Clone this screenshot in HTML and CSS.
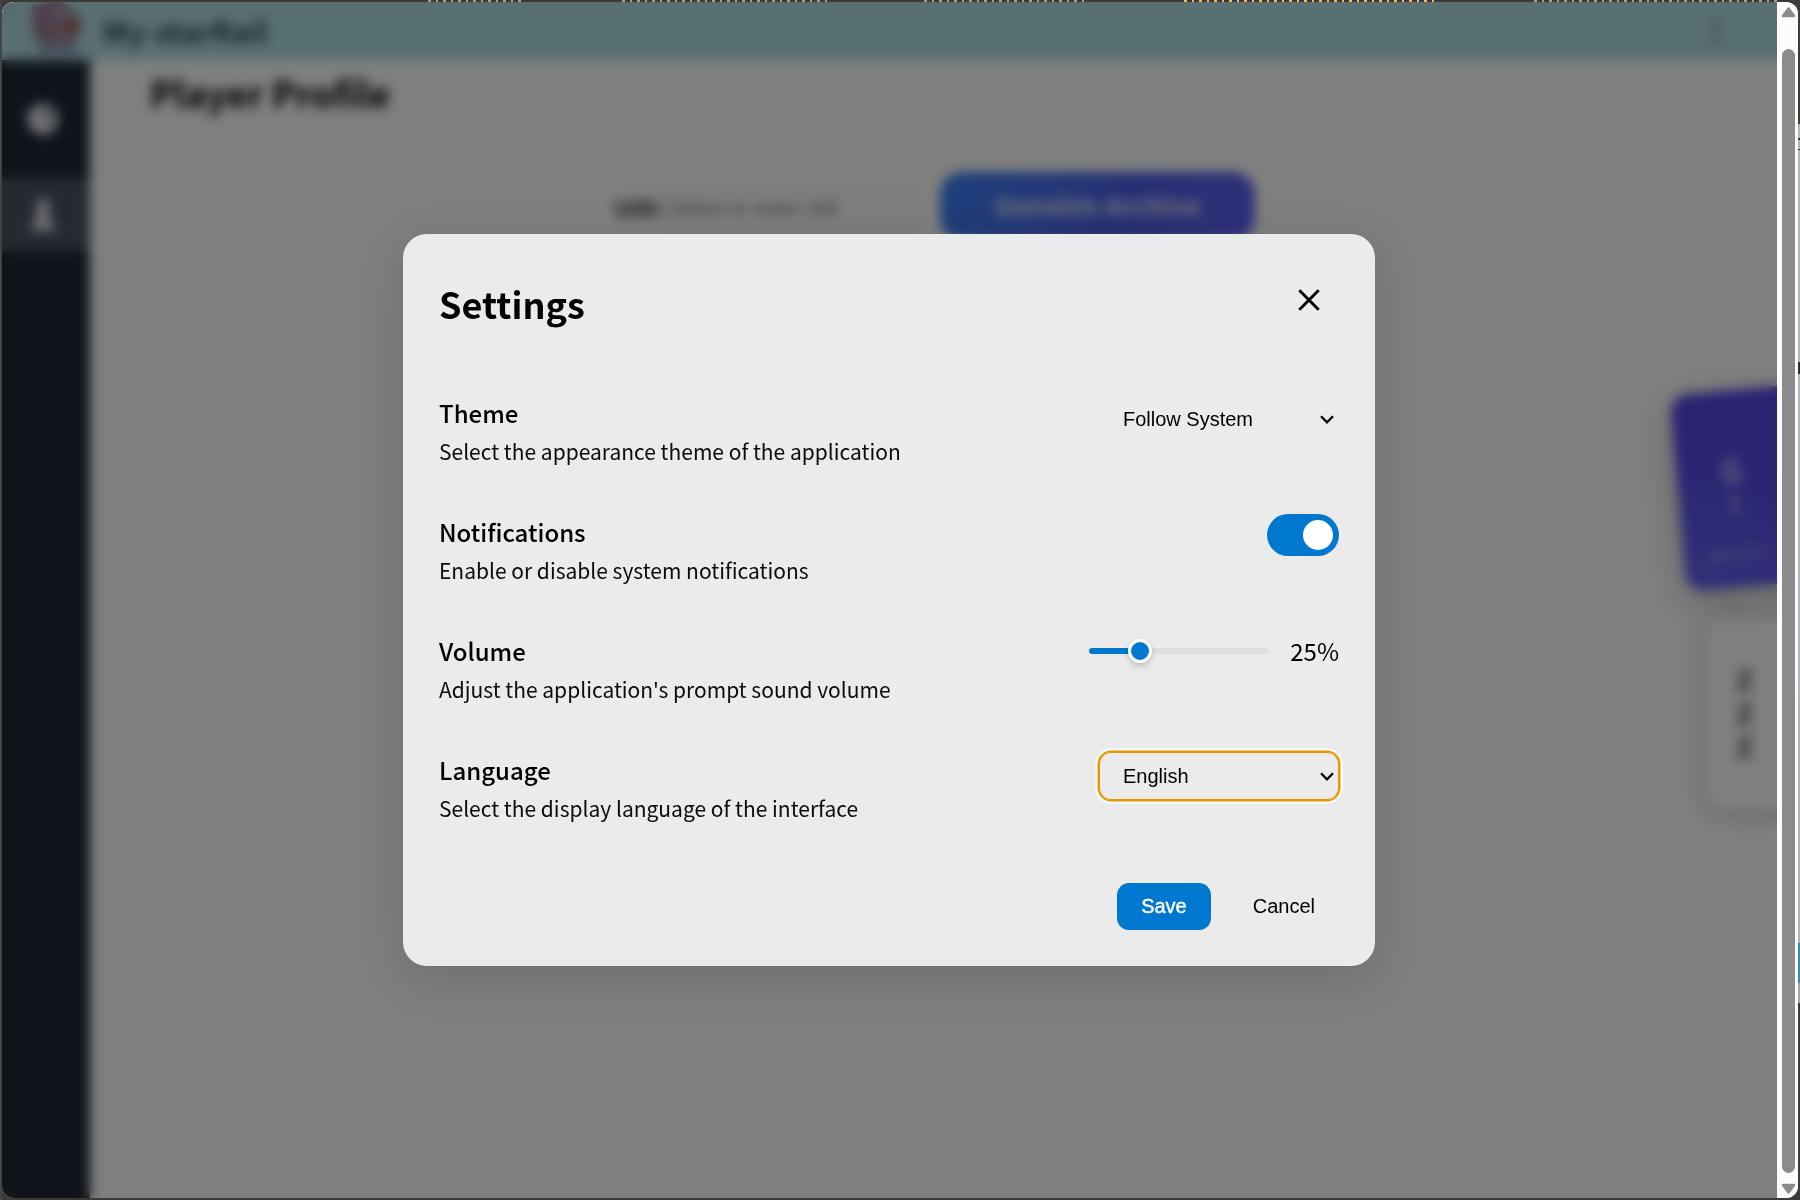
FILE: index.html
```html
<!DOCTYPE html>
<html lang="en">
<head>
<meta charset="utf-8">
<title>My-starRail</title>
<link rel="stylesheet" href="styles.css">
</head>
<body>
<div class="desktop-strip"><i class="s1"></i><i class="s2"></i><i class="s3"></i><i class="s4"></i><i class="s5"></i></div>
<div class="desktop-edge"></div>
<div class="window">
  <div class="view">
    <header class="topbar">
      <svg class="logo" viewBox="0 0 52 52"><circle cx="26" cy="25" r="24" fill="#a397a6"/><path d="M2 4h22l-6 18L2 26z" fill="#a0789b"/><circle cx="13" cy="30" r="6" fill="#8f686c"/><circle cx="43" cy="25" r="8" fill="#9a5c58"/><circle cx="25" cy="27" r="7" fill="#a8788c"/><path d="M8 40h38v12H8z" fill="#8f92b0"/></svg>
      <span class="brand">My-starRail</span>
      <span class="more"><i></i><i></i><i></i></span>
    </header>
    <div class="body">
      <nav class="sidebar">
        <a class="nav-item"><svg viewBox="0 0 36 36"><circle cx="18" cy="18" r="15.5" fill="#e5e7eb"/><path d="M20 2v15l11-9M20 17l12 4" stroke="#1f2937" stroke-width="1.5" fill="none"/></svg></a>
        <a class="nav-item active"><svg viewBox="0 0 36 36"><circle cx="18" cy="9" r="7" fill="#e5e7eb"/><path d="M13 14h10l1 8 6 6v5H6v-5l6-6z" fill="#e5e7eb"/></svg></a>
      </nav>
      <main class="page">
        <h1>Player Profile</h1>
        <div class="search"><b>UID:</b><span class="field">Select or enter UID</span><span class="archive">Genshin Archive</span></div>
        <div class="card game"><b>G</b><span>I</span><small>genshin</small></div>
        <div class="card zone"><b>Z</b><b>Z</b><b>Z</b></div>
      </main>
    </div>
    <div class="backdrop"></div>
    <div class="modal-layer">
      <section class="dialog">
        <div class="dialog-head">
          <h2>Settings</h2>
          <svg class="close" viewBox="0 0 24 24"><path d="M2.3 2.3l19.4 19.4M21.7 2.3L2.3 21.7" stroke="#000" stroke-width="2.9" fill="none"/></svg>
        </div>
        <div class="rows">
          <div class="row">
            <div><div class="label">Theme</div><div class="desc">Select the appearance theme of the application</div></div>
            <div class="select">Follow System<svg viewBox="0 0 14 9"><path d="M1 1.3l6 6 6-6" stroke="#000" stroke-width="2.3" fill="none"/></svg></div>
          </div>
          <div class="row">
            <div><div class="label">Notifications</div><div class="desc">Enable or disable system notifications</div></div>
            <div class="toggle"><i></i></div>
          </div>
          <div class="row">
            <div><div class="label">Volume</div><div class="desc">Adjust the application's prompt sound volume</div></div>
            <div class="volume"><div class="track"><i class="thumb"></i></div><span>25%</span></div>
          </div>
          <div class="row">
            <div><div class="label">Language</div><div class="desc">Select the display language of the interface</div></div>
            <div class="select focus">English<svg viewBox="0 0 14 9"><path d="M1 1.3l6 6 6-6" stroke="#000" stroke-width="2.3" fill="none"/></svg></div>
          </div>
        </div>
        <div class="actions"><span class="btn save">Save</span><span class="btn">Cancel</span></div>
      </section>
    </div>
  </div>
  <div class="scrollbar">
    <svg viewBox="0 0 15 11"><path d="M7.5 2L13 9.5H2z" fill="#8b8b8b" stroke="#8b8b8b" stroke-width="2.5" stroke-linejoin="round"/></svg>
    <i></i>
    <svg viewBox="0 0 15 11"><path d="M7.5 9L13 1.5H2z" fill="#8b8b8b" stroke="#8b8b8b" stroke-width="2.5" stroke-linejoin="round"/></svg>
  </div>
</div>
</body>
</html>
```

FILE: styles.css
```css
* { box-sizing: border-box; }
body {
  margin: 0;
  width: 1800px;
  height: 1200px;
  padding: 2px;
  overflow: hidden;
  position: relative;
  background: linear-gradient(90deg, #484947, #3b3a39 3px);
  font-family: "Noto Sans CJK SC", "Noto Sans", sans-serif;
  color: #000;
}
.desktop-strip { position: absolute; left: 0; top: 0; width: 1800px; height: 2px; }
.desktop-strip i { position: absolute; top: 0; height: 2px; background: repeating-linear-gradient(90deg, #b3987f 0 3px, transparent 3px 8px, #b3987f 8px 10px, transparent 10px 15px); }
.desktop-strip .s1 { left: 428px; width: 98px; }
.desktop-strip .s2 { left: 622px; width: 206px; }
.desktop-strip .s3 { left: 924px; width: 162px; }
.desktop-strip .s4 { left: 1184px; width: 252px; filter: sepia(1) saturate(2.2); }
.desktop-strip .s5 { left: 1534px; width: 246px; }
.desktop-edge {
  position: absolute; right: 0; top: 0; width: 3px; height: 1200px;
  background: linear-gradient(#3f3b39 0 124px, #a9b9b7 124px 138px, #303535 138px 140px, #a9b9b7 140px 149px, #303535 149px 150px, #a9b9b7 150px 362px, #29323a 362px 374px, #aabbbc 374px 680px, #b3b3b3 695px 943px, #328cab 943px 983px, #a4a4a4 983px 1003px, #3b3b3b 1003px);
}
.window {
  position: relative;
  display: flex;
  width: 1796px;
  height: 1196px;
  border-radius: 12px;
  overflow: hidden;
  background: #fff;
}
.view { position: relative; width: 1775px; height: 1196px; overflow: hidden; display: flex; flex-direction: column; }
.topbar {
  flex: none;
  height: 58px;
  background: #b2e0e6;
  display: flex;
  align-items: center;
  padding: 0 50px 0 28px;
}
.logo { width: 52px; height: 52px; margin-top: -8px; }
.brand { margin: -3px 0 0 21px; font: 700 29px/36px "Noto Sans CJK SC", sans-serif; color: #2c4a58; letter-spacing: .3px; }
.more { margin-left: auto; display: grid; gap: 5px; padding-right: 8px; }
.more i { width: 5px; height: 5px; border-radius: 50%; background: #40595e; }
.body { flex: 1; display: flex; }
.sidebar { width: 88px; background: #1f2937; padding-top: 22px; display: flex; flex-direction: column; gap: 23px; }
.nav-item { height: 73px; padding-right: 7px; display: flex; align-items: center; justify-content: center; }
.nav-item.active { background: #4b5563; }
.nav-item svg { width: 36px; height: 36px; }
.page { position: relative; flex: 1; background: #fff; padding: 6px 0 0 60px; }
.page h1 { margin: 0; font-size: 36px; line-height: 52px; }
.search { display: flex; align-items: center; margin: 54px 0 0 464px; }
.search b { font-size: 23px; width: 48px; color: #333; padding-top: 1px; }
.field { width: 254px; height: 38px; margin-top: 4px; padding-left: 5px; border: 2px solid #e6e6e6; font: 20px/34px "Liberation Sans", sans-serif; color: #757575; }
.archive {
  margin-left: 24px; width: 315px; height: 68px; border-radius: 22px;
  background: linear-gradient(110deg, #3c82f8, #4c5fe8 60%, #6060f4);
  color: #e4e4f4; font-weight: 700; font-size: 26px; line-height: 65px; text-align: center;
}
.card { position: absolute; width: 140px; display: flex; flex-direction: column; align-items: center; border-radius: 18px; color: #c4c4ee; }
.card.game {
  left: 1588px; top: 329px; height: 197px; padding: 60px 30px 0 0; transform: rotate(-5deg);
  background: linear-gradient(20deg, #6262f0, #5448e6 60%);
  box-shadow: 0 12px 36px rgba(0,0,0,.25);
}
.card.game b { font-size: 32px; line-height: 36px; }
.card.game span { font-size: 27px; line-height: 34px; font-weight: 700; }
.card.game small { font-size: 17px; line-height: 20px; margin-top: 22px; opacity: .7; }
.card.zone { left: 1616px; top: 558px; height: 192px; padding: 46px 63px 0 0; background: #fff; color: #374151; box-shadow: 0 3px 22px rgba(0,0,0,.25); }
.card.zone b { font: 700 28px/33.5px "Liberation Sans", sans-serif; }
.backdrop { position: absolute; inset: 0; background: rgba(0,0,0,.5); backdrop-filter: blur(6px); }
.modal-layer { position: absolute; inset: 0; display: flex; align-items: center; justify-content: center; }
.dialog {
  width: 972px; height: 732px; padding: 36px; margin-right: 1px;
  border-radius: 24px;
  background: radial-gradient(ellipse 170px 22px at 695px 0, #e8eaef, transparent) #ebebeb;
  box-shadow: 0 12px 48px rgba(0,0,0,.13);
  display: flex; flex-direction: column;
}
.dialog-head { display: flex; justify-content: space-between; height: 125px; padding: 7px 18px 0 0; }
.dialog-head h2 { margin: 0; font-size: 36px; line-height: 52px; font-weight: 700; }
.close { width: 24px; height: 24px; margin-top: 11px; }
.rows { display: flex; flex-direction: column; gap: 48px; }
.row { display: flex; justify-content: space-between; align-items: flex-start; height: 71px; }
.label { font-size: 24px; line-height: 35px; font-weight: 500; }
.desc { font-size: 21px; line-height: 31px; margin-top: 6px; color: #0c0c0c; }
.select {
  width: 240px; height: 48px; padding: 0 5px 0 24px; border-radius: 12px;
  display: flex; align-items: center; justify-content: space-between;
  font: 20px/48px "Liberation Sans", Arial, sans-serif;
}
.select svg { width: 14px; height: 9px; }
.select.focus { box-shadow: 0 0 0 1.5px #e59700, 0 0 0 3.5px #fff, inset 0 0 0 1px #e59700; }
.toggle { width: 72px; height: 42px; border-radius: 21px; background: #0078d0; padding: 6px; display: flex; justify-content: flex-end; }
.toggle i { width: 30px; height: 30px; border-radius: 50%; background: #fff; }
.volume { display: flex; align-items: center; height: 35px; font-size: 24px; line-height: 35px; }
.volume span { width: 70px; text-align: right; }
.track {
  width: 180px; height: 6px; border-radius: 3px; display: flex; align-items: center; padding-left: 39px;
  background: linear-gradient(90deg, #0078d0 51px, #dfdfdf 51px);
}
.thumb { width: 24px; height: 24px; border: 3px solid #fff; border-radius: 50%; background: #0078d0; box-shadow: 0 3px 6px rgba(0,0,0,.2); }
.actions { display: flex; justify-content: flex-end; gap: 18px; margin-top: 60px; }
.btn { height: 47px; padding: 0 24px; border-radius: 12px; font: 20px/46px "Liberation Sans", Arial, sans-serif; }
.save { background: #0078d0; color: #fff; -webkit-text-stroke: .4px #fff; }
.scrollbar { width: 21px; background: #fcfcfc; display: flex; flex-direction: column; align-items: center; padding: 4px 0 3px 2px; }
.scrollbar svg { width: 15px; height: 12px; flex: none; }
.scrollbar i { width: 13px; height: 1124px; margin: 31px 0 auto; border-radius: 7px; background: #8b8b8b; }
```
